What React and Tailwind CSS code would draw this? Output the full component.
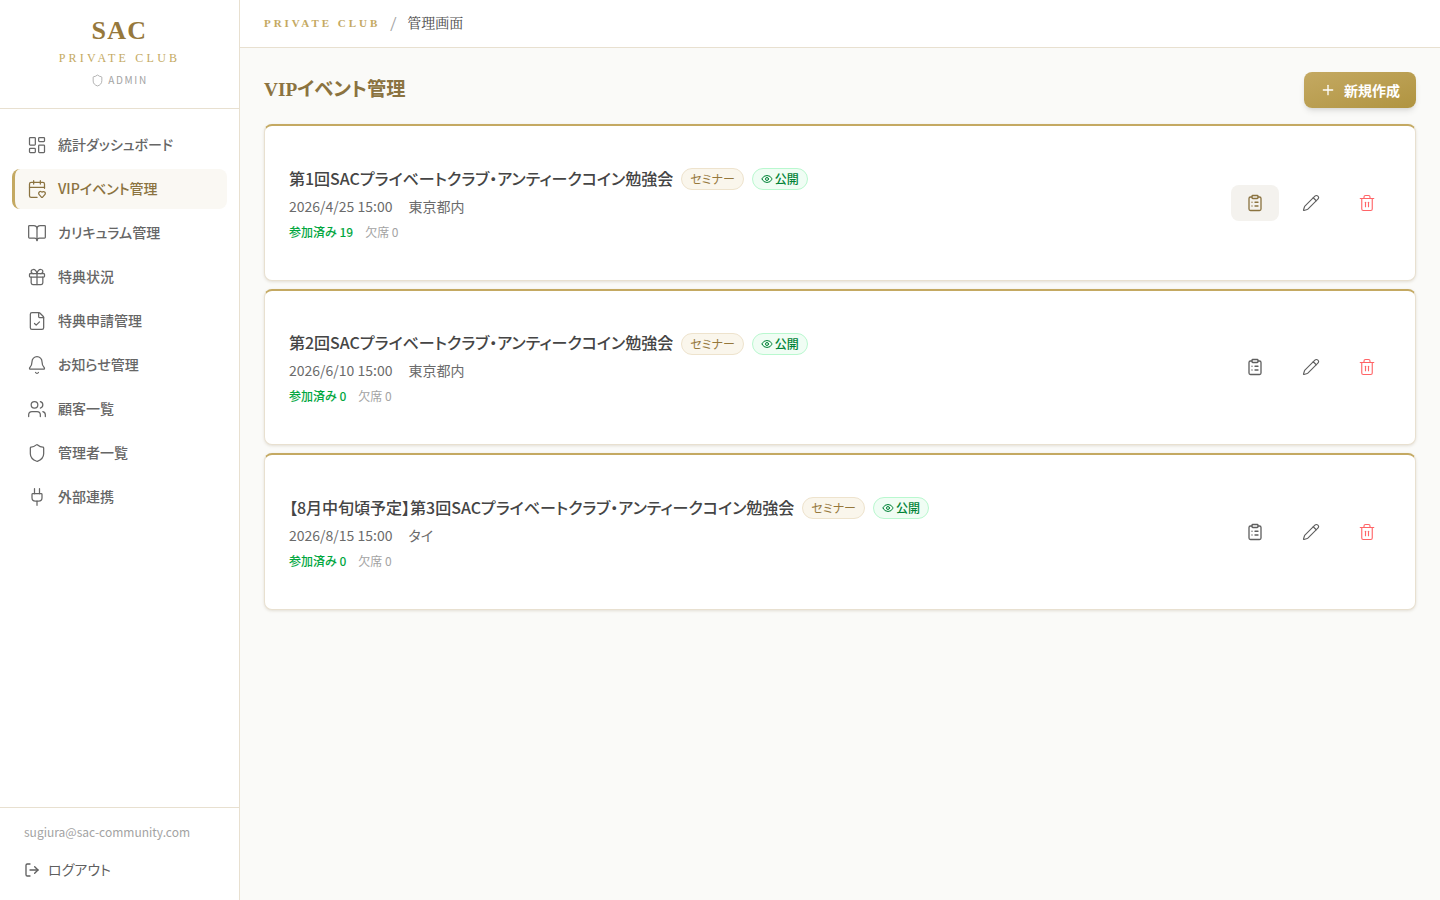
import React from "react";
import { LayoutDashboard, CalendarHeart, BookOpen, Gift, FileCheck, Bell, Users, Shield, Plug, LogOut, ClipboardList, Pencil, Trash2, Eye, Plus } from "lucide-react";

const sans = "font-['Noto_Sans_CJK_JP','Noto_Sans',sans-serif] [font-feature-settings:'palt']";
const nav = [
  [LayoutDashboard, "統計ダッシュボード"],
  [CalendarHeart, "VIPイベント管理", true],
  [BookOpen, "カリキュラム管理"],
  [Gift, "特典状況"],
  [FileCheck, "特典申請管理"],
  [Bell, "お知らせ管理"],
  [Users, "顧客一覧"],
  [Shield, "管理者一覧"],
  [Plug, "外部連携"],
];
const events = [
  { t: "第1回SACプライベートクラブ・アンティークコイン勉強会", d: "2026/4/25 15:00", p: "東京都内", n: 19, hl: true },
  { t: "第2回SACプライベートクラブ・アンティークコイン勉強会", d: "2026/6/10 15:00", p: "東京都内", n: 0 },
  { t: "【8月中旬頃予定】第3回SACプライベートクラブ・アンティークコイン勉強会", d: "2026/8/15 15:00", p: "タイ", n: 0 },
];

function Card({ e }) {
  return (
    <div className="h-[156.5px] flex items-center justify-between rounded-lg bg-white border border-[#e8e0d0] border-t-2 border-t-[#c4a962] shadow-[0_1px_3px_rgba(120,100,60,0.18)] pl-6 pr-6">
      <div className="flex flex-col mb-[2px]">
        <div className="flex items-center gap-2 h-7">
          <span className="text-base leading-7 font-medium text-[#454545]">{e.t}</span>
          <span className="h-[22px] mt-[3px] px-2 flex items-center rounded-full bg-[#faf6ec] border border-[#eee3cd] text-xs text-[#96783c]">セミナー</span>
          <span className="h-[22px] mt-[3px] px-2 flex items-center gap-[2px] rounded-full bg-green-50 border border-green-200 text-xs font-medium text-green-700">
            <Eye size={12} strokeWidth={2} />公開
          </span>
        </div>
        <div className="mt-[2px] text-sm leading-6 text-[#6b6b6b] flex gap-4"><span>{e.d}</span><span>{e.p}</span></div>
        <div className="mt-[6px] text-xs leading-4 flex gap-3">
          <span className="font-medium text-green-600">参加済み {e.n}</span>
          <span className="text-[#a3a3a3]">欠席 0</span>
        </div>
      </div>
      <div className="flex items-center gap-2">
        <button className={`w-12 h-9 flex items-center justify-center rounded-lg ${e.hl ? "bg-[#f4f2ee] text-[#8b7340]" : "text-[#5f5f5f]"}`}><ClipboardList size={18} strokeWidth={1.75} /></button>
        <button className="w-12 h-9 flex items-center justify-center text-[#5f5f5f]"><Pencil size={18} strokeWidth={1.5} /></button>
        <button className="w-12 h-9 flex items-center justify-center text-red-400"><Trash2 size={18} strokeWidth={1.5} /></button>
      </div>
    </div>
  );
}

export default function App() {
  return (
    <div className={`${sans} w-full h-[900px] flex bg-[#fafaf8] overflow-hidden`}>
      <aside className="w-[240px] shrink-0 h-full bg-white border-r border-[#e8e0d0] flex flex-col">
        <div className="h-[109px] shrink-0 border-b border-[#e8e0d0] flex flex-col items-center pt-[15px]">
          <div className="font-['Liberation_Serif',serif] text-[26px] leading-8 font-bold tracking-[0.05em] text-[#96783c]">SAC</div>
          <div className="font-['Liberation_Serif',serif] text-[12px] leading-4 mt-[3px] tracking-[0.27em] text-[#c4a962]">PRIVATE CLUB</div>
          <div className="mt-[6px] flex items-center gap-1 text-[10px] leading-4 tracking-[0.17em] text-[#a3a3a3]"><Shield size={13} strokeWidth={1.5} />ADMIN</div>
        </div>
        <nav className="flex-1 pt-[16px] px-3 flex flex-col gap-1">
          {nav.map(([I, label, active]) => (
            <div key={label} className={`h-10 flex items-center gap-[11px] rounded-lg pr-3 text-sm font-medium ${active ? "bg-[#faf8f3] border-l-[3px] border-[#c4a962] pl-[12px] text-[#8b7340]" : "pl-[15px] text-[#666666]"}`}>
              <I size={20} strokeWidth={1.5} className="shrink-0" />
              <span className="mb-[2px]">{label}</span>
            </div>
          ))}
        </nav>
        <div className="h-[93px] shrink-0 border-t border-[#e8e0d0] px-6 pt-[14px]">
          <div className="text-xs leading-5 text-[#a3a3a3]">sugiura@sac-community.com</div>
          <div className="mt-[17px] flex items-center gap-2 text-sm text-[#5f5f5f]"><LogOut size={16} strokeWidth={2} /><span className="mb-[1px]">ログアウト</span></div>
        </div>
      </aside>
      <div className="flex-1 flex flex-col min-w-0">
        <header className="h-12 shrink-0 bg-white border-b border-[#e8e0d0] flex items-center px-6">
          <span className="font-['Liberation_Serif',serif] text-[11px] tracking-[0.27em] text-[#c4a962] font-semibold mb-[1px]">PRIVATE CLUB</span>
          <span className="ml-[10px] text-[#a3a3a3] text-[22px] leading-none font-['Liberation_Serif',serif]">/</span>
          <span className="ml-[11px] mb-[3px] text-sm text-[#4f4f4f] font-['Noto_Serif_CJK_JP','Noto_Sans_CJK_JP',serif]">管理画面</span>
        </header>
        <main className="flex-1 p-6">
          <div className="flex items-center justify-between h-9 mb-4">
            <h1 className="text-[19.25px] font-bold text-[#8b7340] font-['Liberation_Serif','Noto_Sans_CJK_JP',serif]">VIPイベント管理</h1>
            <button className="h-9 w-28 flex items-center justify-center gap-2 rounded-lg bg-gradient-to-br from-[#c4a962] to-[#b09440] text-white text-sm font-bold shadow-md"><Plus size={16} />新規作成</button>
          </div>
          <div className="flex flex-col gap-2">
            {events.map((e) => <Card key={e.t} e={e} />)}
          </div>
        </main>
      </div>
    </div>
  );
}
